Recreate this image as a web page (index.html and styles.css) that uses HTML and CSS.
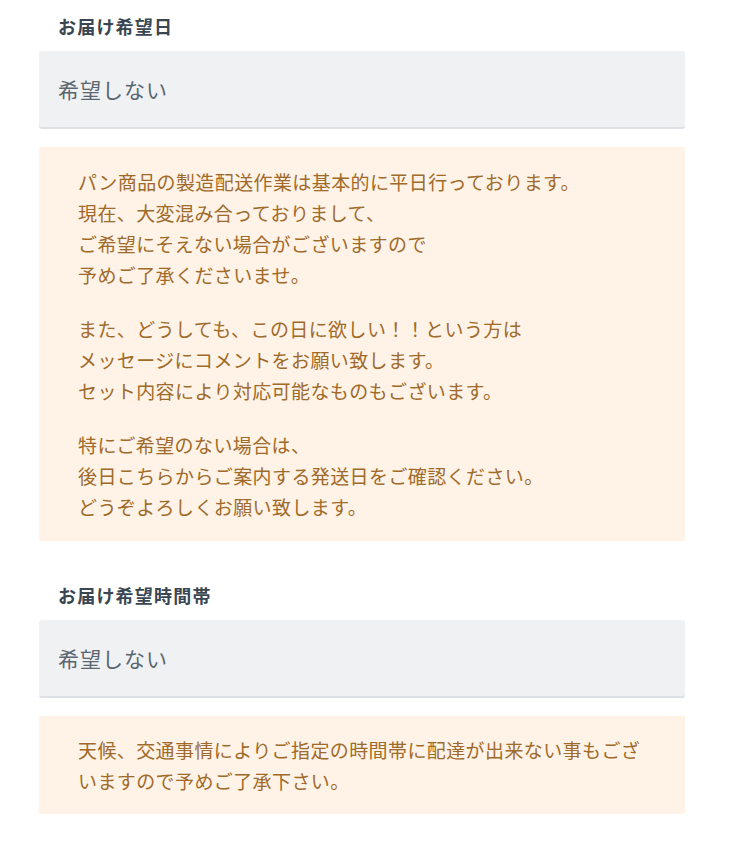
FILE: index.html
```html
<!DOCTYPE html>
<html lang="ja">
<head>
<meta charset="utf-8">
<title>お届け希望日</title>
<link rel="stylesheet" href="styles.css">
</head>
<body>
<main class="form">
  <section class="field">
    <h2 class="field-label">お届け希望日</h2>
    <div class="select"><span class="select-value">希望しない</span></div>
    <div class="notice">
      <p>パン商品の製造配送作業は基本的に平日行っております。<br>現在、大変混み合っておりまして、<br>ご希望にそえない場合がございますので<br>予めご了承くださいませ。</p>
      <p>また、どうしても、この日に欲しい！！という方は<br>メッセージにコメントをお願い致します。<br>セット内容により対応可能なものもございます。</p>
      <p>特にご希望のない場合は、<br>後日こちらからご案内する発送日をご確認ください。<br>どうぞよろしくお願い致します。</p>
    </div>
  </section>
  <section class="field">
    <h2 class="field-label">お届け希望時間帯</h2>
    <div class="select"><span class="select-value">希望しない</span></div>
    <div class="notice notice-short">
      <p>天候、交通事情によりご指定の時間帯に配達が出来ない事もございますので予めご了承下さい。</p>
    </div>
  </section>
</main>
</body>
</html>
```
FILE: styles.css
```css
html, body {
  margin: 0;
  padding: 0;
  background: #ffffff;
}
body {
  font-family: "Noto Sans CJK JP", "Noto Sans", sans-serif;
}
.form {
  width: 646px;
  margin-left: 39px;
  padding-top: 13px;
}
.field + .field {
  margin-top: 41px;
}
.field-label {
  margin: 0 0 11px 0;
  padding-left: 19px;
  font-size: 18px;
  line-height: 27px;
  font-weight: 700;
  letter-spacing: 1.2px;
  color: #3a4651;
}
.select {
  box-sizing: border-box;
  height: 78px;
  display: flex;
  align-items: center;
  padding-left: 19px;
  background: #eff1f3;
  border-radius: 3px;
  border-bottom: 2px solid #dde1e5;
}
.select-value {
  font-size: 21px;
  letter-spacing: 1px;
  color: #5a6670;
}
.notice {
  margin-top: 18px;
  padding: 19px 39px 19px 39px;
  background: #fef3e6;
  color: #a06a2a;
  font-size: 19px;
  line-height: 31px;
  letter-spacing: 0.4px;
}
.notice p {
  margin: 0;
}
.notice p + p {
  margin-top: 23px;
}
.notice-short {
  padding-top: 18px;
  padding-bottom: 18px;
}
```
